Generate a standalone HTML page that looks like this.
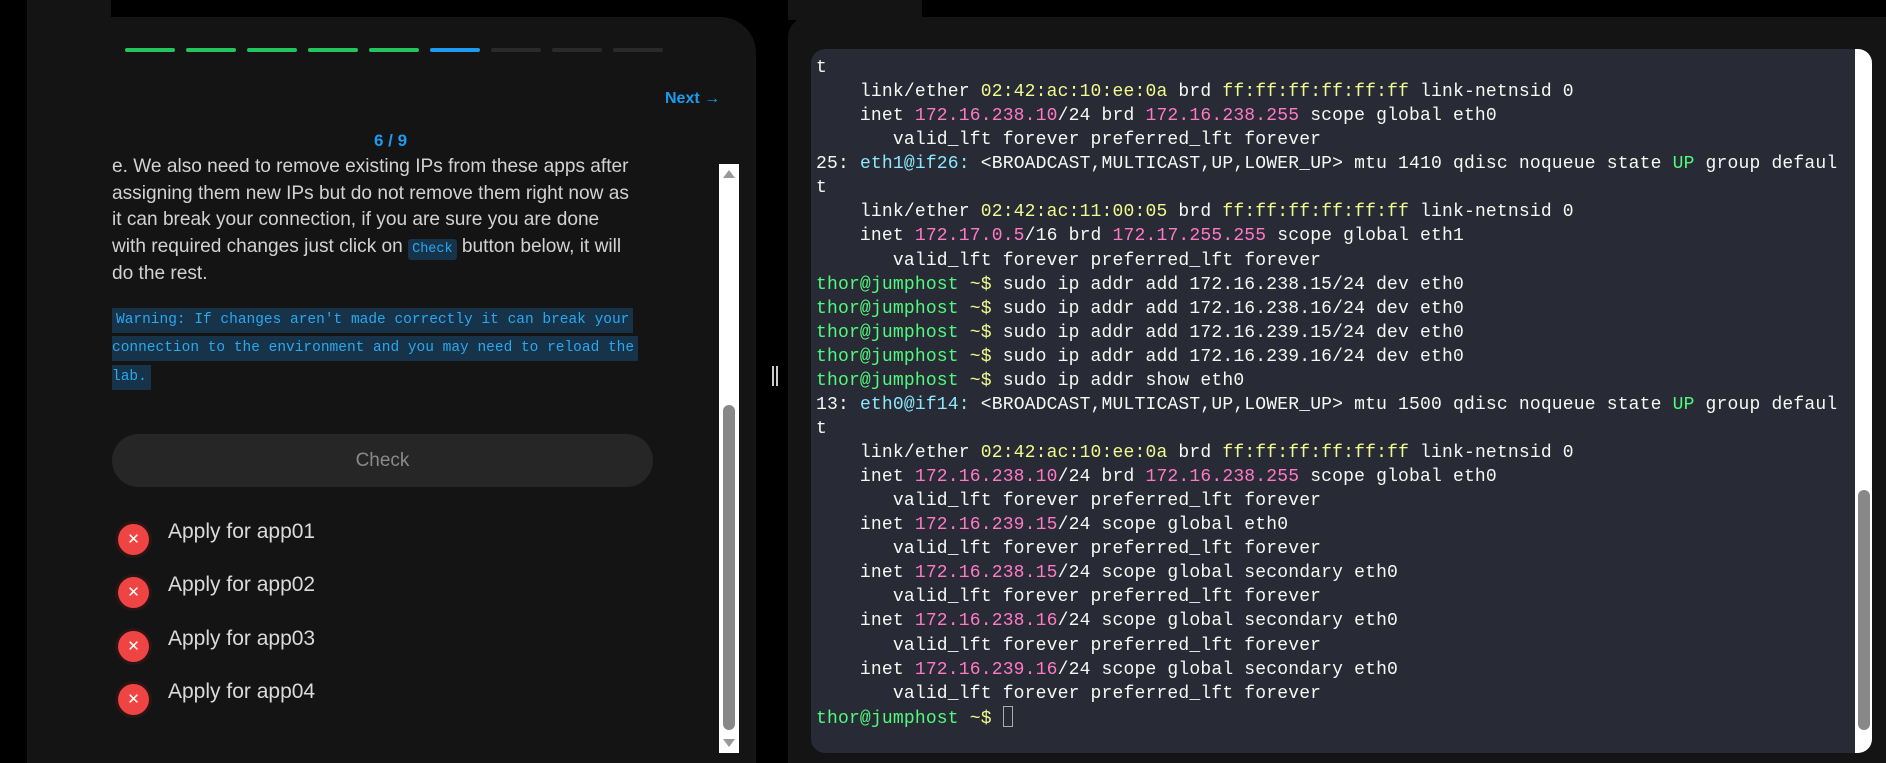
<!DOCTYPE html>
<html><head><meta charset="utf-8"><style>
*{margin:0;padding:0;box-sizing:border-box}
body{width:1886px;height:763px;background:#000;position:relative;overflow:hidden;font-family:"Liberation Sans",sans-serif}
.abs{position:absolute}
.lp{left:27px;top:17px;width:729px;height:746px;background:#141414;border-top-right-radius:36px}
.seg{position:absolute;top:48px;height:4px;width:50px;border-radius:2px;background:#2a2a2a}
.txt{position:absolute;left:112px;color:#d2d2d2;font-size:19.1px;line-height:27px;white-space:nowrap}
.code{font-family:"Liberation Mono",monospace;font-size:13.5px;color:#2aa8f0;background:#163349;padding:3px 4px;border-radius:3px}
.warn{position:absolute;left:112px;font-family:"Liberation Mono",monospace;font-size:14.5px;color:#2aa8f0;background:#163349;height:25px;line-height:25px;padding:0 4px;white-space:nowrap}
.it{position:absolute;left:168px;color:#dadada;font-size:21px}
.ic{position:absolute;left:115px;width:37px;height:37px;border-radius:50%;background:#2a1414}
.ic i{position:absolute;left:3px;top:3px;width:31px;height:31px;border-radius:50%;background:#ef4444;color:#fff;font-style:normal;font-size:15px;text-align:center;line-height:31px}
.term{left:811px;top:49px;width:1061px;height:704px;background:#282a36;border-radius:14px;overflow:hidden}
.term pre{position:absolute;left:5px;top:7px;font-family:"Liberation Mono",monospace;font-size:18px;line-height:24.06px;color:#f8f8f2;letter-spacing:0.18px}
.y{color:#f1fa8c}.p{color:#ff79c6}.c{color:#8be9fd}.g{color:#50fa7b}
</style></head><body>
<div class="abs" style="left:27px;top:0;width:84px;height:20px;background:#141414"></div>
<div class="abs lp"></div>
<div class="seg" style="left:125px;background:#22c55e"></div>
<div class="seg" style="left:186px;background:#22c55e"></div>
<div class="seg" style="left:247px;background:#22c55e"></div>
<div class="seg" style="left:308px;background:#22c55e"></div>
<div class="seg" style="left:369px;background:#22c55e"></div>
<div class="seg" style="left:430px;background:#1d9bf0"></div>
<div class="seg" style="left:491px"></div>
<div class="seg" style="left:552px"></div>
<div class="seg" style="left:613px"></div>
<div class="abs" style="left:665px;top:90px;color:#1d9bf0;font-weight:bold;font-size:16px">Next &#8594;</div>
<div class="abs" style="left:374px;top:131px;color:#1d9bf0;font-weight:bold;font-size:17px">6 / 9</div>
<div class="abs" style="left:100px;top:156px;width:620px;height:600px;overflow:hidden">
<div class="txt" style="left:12px;top:-3px">e. We also need to remove existing IPs from these apps after</div>
<div class="txt" style="left:12px;top:24px">assigning them new IPs but do not remove them right now as</div>
<div class="txt" style="left:12px;top:50px">it can break your connection, if you are sure you are done</div>
<div class="txt" style="left:12px;top:77px">with required changes just click on <span class="code">Check</span> button below, it will</div>
<div class="txt" style="left:12px;top:104px">do the rest.</div>
<div class="warn" style="left:12px;top:152px">Warning: If changes aren't made correctly it can break your</div>
<div class="warn" style="left:12px;top:180px;padding-left:0">connection to the environment and you may need to reload the</div>
<div class="warn" style="left:12px;top:209px;padding-left:0">lab.</div>
</div>
<div class="abs" style="left:112px;top:434px;width:541px;height:53px;border-radius:27px;background:#262626;color:#8a8a8a;font-size:19px;text-align:center;line-height:53px">Check</div>
<div class="ic" style="top:521px"><i>✕</i></div><div class="it" style="top:520px">Apply for app01</div>
<div class="ic" style="top:574px"><i>✕</i></div><div class="it" style="top:573px">Apply for app02</div>
<div class="ic" style="top:628px"><i>✕</i></div><div class="it" style="top:627px">Apply for app03</div>
<div class="ic" style="top:681px"><i>✕</i></div><div class="it" style="top:680px">Apply for app04</div>
<div class="abs" style="left:719px;top:164px;width:20px;height:589px;background:#fff"></div>
<div class="abs" style="left:723px;top:405px;width:12px;height:325px;background:#888;border-radius:6px"></div>
<div class="abs" style="left:723px;top:170px;width:0;height:0;border-left:6px solid transparent;border-right:6px solid transparent;border-bottom:8px solid #999"></div>
<div class="abs" style="left:723px;top:739px;width:0;height:0;border-left:6px solid transparent;border-right:6px solid transparent;border-top:8px solid #999"></div>
<div class="abs" style="left:772px;top:366px;width:2px;height:20px;background:#ccc"></div>
<div class="abs" style="left:776px;top:366px;width:2px;height:20px;background:#ccc"></div>

<div class="abs" style="left:788px;top:0;width:134px;height:20px;background:#141414"></div>
<div class="abs" style="left:788px;top:17px;width:1098px;height:746px;background:#141414;border-top-left-radius:20px"></div>
<div class="abs term"><pre>t
    link/ether <span class="y">02:42:ac:10:ee:0a</span> brd <span class="y">ff:ff:ff:ff:ff:ff</span> link-netnsid 0
    inet <span class="p">172.16.238.10</span>/24 brd <span class="p">172.16.238.255</span> scope global eth0
       valid_lft forever preferred_lft forever
25: <span class="c">eth1@if26:</span> &lt;BROADCAST,MULTICAST,UP,LOWER_UP&gt; mtu 1410 qdisc noqueue state <span class="g">UP</span> group defaul
t
    link/ether <span class="y">02:42:ac:11:00:05</span> brd <span class="y">ff:ff:ff:ff:ff:ff</span> link-netnsid 0
    inet <span class="p">172.17.0.5</span>/16 brd <span class="p">172.17.255.255</span> scope global eth1
       valid_lft forever preferred_lft forever
<span class="g">thor@jumphost</span> <span class="y">~$</span> sudo ip addr add 172.16.238.15/24 dev eth0
<span class="g">thor@jumphost</span> <span class="y">~$</span> sudo ip addr add 172.16.238.16/24 dev eth0
<span class="g">thor@jumphost</span> <span class="y">~$</span> sudo ip addr add 172.16.239.15/24 dev eth0
<span class="g">thor@jumphost</span> <span class="y">~$</span> sudo ip addr add 172.16.239.16/24 dev eth0
<span class="g">thor@jumphost</span> <span class="y">~$</span> sudo ip addr show eth0
13: <span class="c">eth0@if14:</span> &lt;BROADCAST,MULTICAST,UP,LOWER_UP&gt; mtu 1500 qdisc noqueue state <span class="g">UP</span> group defaul
t
    link/ether <span class="y">02:42:ac:10:ee:0a</span> brd <span class="y">ff:ff:ff:ff:ff:ff</span> link-netnsid 0
    inet <span class="p">172.16.238.10</span>/24 brd <span class="p">172.16.238.255</span> scope global eth0
       valid_lft forever preferred_lft forever
    inet <span class="p">172.16.239.15</span>/24 scope global eth0
       valid_lft forever preferred_lft forever
    inet <span class="p">172.16.238.15</span>/24 scope global secondary eth0
       valid_lft forever preferred_lft forever
    inet <span class="p">172.16.238.16</span>/24 scope global secondary eth0
       valid_lft forever preferred_lft forever
    inet <span class="p">172.16.239.16</span>/24 scope global secondary eth0
       valid_lft forever preferred_lft forever
<span class="g">thor@jumphost</span> <span class="y">~$</span> <span style="display:inline-block;width:10px;height:21px;border:1px solid #aaa;vertical-align:-4px"></span></pre>
<div class="abs" style="left:1044px;top:0;width:17px;height:704px;background:#fff"></div>
<div class="abs" style="left:1047px;top:441px;width:12px;height:240px;background:#888;border-radius:6px"></div>
</div>
</body></html>
